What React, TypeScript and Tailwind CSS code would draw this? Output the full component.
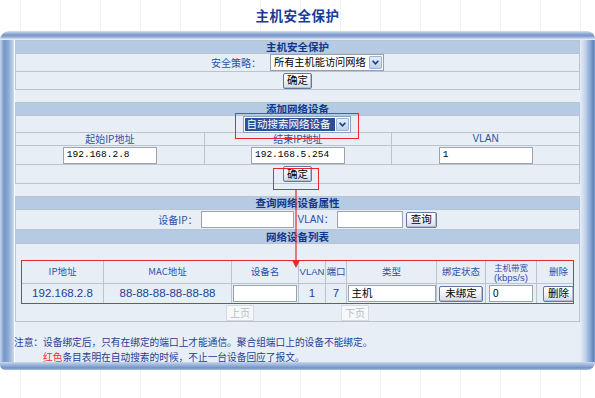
import React from "react";

const LINE = "border-[#bcc3cc]";

function Chevron() {
  return (
    <svg width="7" height="5" viewBox="0 0 7 5">
      <path d="M0.6 0.8 L3.5 3.8 L6.4 0.8" stroke="#1c3b7c" strokeWidth="1.6" fill="none" />
    </svg>
  );
}

function Btn({ children, className = "" }: { children: React.ReactNode; className?: string }) {
  return (
    <div
      className={
        "h-[16px] flex items-center justify-center border border-[#6179a0] rounded-[2px] bg-[linear-gradient(to_bottom,#ffffff,#eef1f5_50%,#d5dce7)] text-[10.5px] leading-none text-black whitespace-nowrap shadow-[inset_-1px_-1px_0_#b3bfd1] " +
        className
      }
    >
      {children}
    </div>
  );
}

function DisabledBtn({ children }: { children: React.ReactNode }) {
  return (
    <div className="h-[16px] w-[28px] flex items-center justify-center border border-[#d6d9de] bg-[#f7f8fa] text-[10px] leading-none text-[#b8bcc4]">
      {children}
    </div>
  );
}

function Input({ value = "", className = "" }: { value?: string; className?: string }) {
  return (
    <div
      className={
        "h-[17px] bg-white border border-[#9aa3af] flex items-center pl-[3px] text-black leading-none whitespace-nowrap overflow-hidden " +
        className
      }
    >
      {value}
    </div>
  );
}

function Select({ text, className = "", highlight = false }: { text: string; className?: string; highlight?: boolean }) {
  return (
    <div className={"h-[17px] flex bg-white border border-[#8ea0b8] " + className}>
      <div className="flex-1 flex items-stretch p-[1px] overflow-hidden">
        {highlight ? (
          <div className="flex-1 flex items-center pl-[2px] bg-[#2d4f9b] text-white text-[10.5px] leading-none whitespace-nowrap">{text}</div>
        ) : (
          <div className="flex-1 flex items-center pl-[2px] text-black text-[10.2px] leading-none whitespace-nowrap">{text}</div>
        )}
      </div>
      <div className="w-[13px] shrink-0 my-[1px] mr-[1px] border border-[#9db3d6] rounded-[1px] bg-[linear-gradient(to_bottom,#e6edf8,#bfd0ea)] flex items-center justify-center">
        <Chevron />
      </div>
    </div>
  );
}

function Header({ children, h = "h-[12px]" }: { children: React.ReactNode; h?: string }) {
  return (
    <div className={h + " bg-[#b5cbe4] flex items-center justify-center text-[10.5px] font-bold text-[#12378a] leading-[12px]"}>
      {children}
    </div>
  );
}

export default function App() {
  return (
    <div className="relative w-[595px] h-[398px] overflow-hidden bg-white bg-[linear-gradient(to_right,#f2f2f2_1px,transparent_1px)] bg-[length:40px_100%] bg-[position:20px_0] font-['Noto_Sans_CJK_SC','Liberation_Sans',sans-serif] text-[10px]">
      <div className="h-[31px] flex items-center justify-center text-[13.5px] font-bold text-[#173d98] tracking-[0.5px] leading-none">
        主机安全保护
      </div>

      <div>
        <div className="h-[9px] rounded-tl-[10px] rounded-tr-[9px] bg-[linear-gradient(to_bottom,#d3dff0_0%,#87a5d1_35%,#7898c9_55%,#b9cbe6_80%,#f2f6fb_100%)]" />
        <div className="flex">
          <div className="w-[15px] border-r border-white bg-[linear-gradient(to_right,#c7d6ec_0%,#7397ca_30%,#8eaad5_60%,#cbd9ee_100%)]" />
          <div className="w-[565px] bg-[#e8eef6] flex flex-col">
            {/* Section 1 */}
            <div className={"border " + LINE}>
              <Header>主机安全保护</Header>
              <div className={"h-[18px] border-t " + LINE + " flex items-center justify-center gap-[9px]"}>
                <span className="text-[10px] text-[#2b52aa] leading-none">安全策略：</span>
                <Select text="所有主机能访问网络" className="w-[114px]" />
              </div>
              <div className={"h-[18px] border-t " + LINE + " flex items-center justify-center"}>
                <Btn className="w-[29px]">确定</Btn>
              </div>
            </div>

            <div className="h-[12px]" />

            {/* Section 2 */}
            <div className={"border " + LINE}>
              <Header>添加网络设备</Header>
              <div className={"h-[17px] border-t " + LINE + " flex items-center justify-center"}>
                <Select text="自动搜索网络设备" className="w-[108px] ml-[-2px]" highlight />
              </div>
              <div className={"h-[13px] border-t " + LINE + " grid grid-cols-3 text-[#2b52aa] text-[10px] leading-none"}>
                <div className="flex items-center justify-center">起始IP地址</div>
                <div className={"flex items-center justify-center border-l " + LINE}>结束IP地址</div>
                <div className={"flex items-center justify-center border-l " + LINE + " font-['Liberation_Sans',sans-serif]"}>VLAN</div>
              </div>
              <div className={"h-[19px] border-t " + LINE + " grid grid-cols-3 font-['Liberation_Mono',monospace] text-[9.5px]"}>
                <div className="flex items-center justify-center">
                  <Input value="192.168.2.8" className="w-[94px]" />
                </div>
                <div className={"flex items-center justify-center border-l " + LINE}>
                  <Input value="192.168.5.254" className="w-[94px]" />
                </div>
                <div className={"flex items-center justify-center border-l " + LINE}>
                  <Input value="1" className="w-[94px]" />
                </div>
              </div>
              <div className={"h-[19px] border-t " + LINE + " flex items-center justify-center"}>
                <Btn className="w-[29px]">确定</Btn>
              </div>
            </div>

            <div className="h-[12px]" />

            {/* Section 3 */}
            <div className={"border " + LINE}>
              <Header>查询网络设备属性</Header>
              <div className={"h-[20px] border-t " + LINE + " flex items-center justify-center text-[#2b52aa] leading-none"}>
                <span className="text-[10px] mr-[3px]">设备IP：</span>
                <Input className="w-[93px]" />
                <span className="ml-[4px] mr-[3px] text-[10px] font-['Liberation_Sans','Noto_Sans_CJK_SC',sans-serif]">VLAN：</span>
                <Input className="w-[66px]" />
                <Btn className="w-[31px] ml-[3px]">查询</Btn>
              </div>
              <div className={"border-t " + LINE}>
                <Header h="h-[13px]">网络设备列表</Header>
              </div>
              <div className={"h-[78px] border-t " + LINE + " flex flex-col"}>
                <div className="h-[16px]" />
                <div className="mx-[5px] border border-[#e8262b]">
                  <div className="grid grid-cols-[81px_128px_67px_27px_21px_90px_49px_51px_44px] text-[#2b52aa] text-[9.5px] leading-none h-[22px]">
                    <div className="flex items-center justify-center">IP地址</div>
                    <div className={"flex items-center justify-center border-l " + LINE}>MAC地址</div>
                    <div className={"flex items-center justify-center border-l " + LINE}>设备名</div>
                    <div className={"flex items-center justify-center border-l " + LINE + " font-['Liberation_Sans',sans-serif]"}>VLAN</div>
                    <div className={"flex items-center justify-center border-l " + LINE}>端口</div>
                    <div className={"flex items-center justify-center border-l " + LINE}>类型</div>
                    <div className={"flex items-center justify-center border-l " + LINE}>绑定状态</div>
                    <div className={"flex flex-col items-center justify-center border-l " + LINE}>
                      <span className="text-[8.5px] leading-[10px]">主机带宽</span>
                      <span className="font-['Liberation_Sans',sans-serif] text-[9.5px] leading-[11px]">(kbps/s)</span>
                    </div>
                    <div className={"flex items-center justify-center border-l " + LINE}>删除</div>
                  </div>
                  <div className={"grid grid-cols-[81px_128px_67px_27px_21px_90px_49px_51px_44px] h-[20px] border-t " + LINE + " text-[#1f3f94] text-[11.5px] leading-none font-['Liberation_Sans',sans-serif]"}>
                    <div className="flex items-center justify-center">192.168.2.8</div>
                    <div className={"flex items-center justify-center border-l " + LINE}>88-88-88-88-88-88</div>
                    <div className={"flex items-center justify-center border-l " + LINE}>
                      <Input className="w-[64px] h-[16px]" />
                    </div>
                    <div className={"flex items-center justify-center border-l " + LINE}>1</div>
                    <div className={"flex items-center justify-center border-l " + LINE}>7</div>
                    <div className={"flex items-center justify-center border-l " + LINE}>
                      <Input value="主机" className="w-[88px] h-[16px] text-[10.5px] font-['Noto_Sans_CJK_SC',sans-serif]" />
                    </div>
                    <div className={"flex items-center justify-center border-l " + LINE + " font-['Noto_Sans_CJK_SC',sans-serif]"}>
                      <Btn className="w-[44px]">未绑定</Btn>
                    </div>
                    <div className={"flex items-center justify-center border-l " + LINE}>
                      <Input value="0" className="w-[44px] h-[16px] text-[10px]" />
                    </div>
                    <div className={"flex items-center justify-center border-l " + LINE + " font-['Noto_Sans_CJK_SC',sans-serif]"}>
                      <Btn className="w-[31px]">删除</Btn>
                    </div>
                  </div>
                </div>
                <div className="flex justify-center gap-[87px] pt-[1px]">
                  <DisabledBtn>上页</DisabledBtn>
                  <DisabledBtn>下页</DisabledBtn>
                </div>
              </div>
            </div>

            {/* Notes */}
            <div className="h-[40px] pt-[13px] text-[9.7px] leading-[15px] text-[#1d3f95] -ml-[1px] whitespace-nowrap">
              <div>注意：设备绑定后，只有在绑定的端口上才能通信。聚合组端口上的设备不能绑定。</div>
              <div className="pl-[29px]">
                <span className="text-[#ff2b2b]">红色</span>条目表明在自动搜索的时候，不止一台设备回应了报文。
              </div>
            </div>
          </div>
          <div className="w-[15px] bg-[linear-gradient(to_right,#e7edf6_0%,#c3d3ea_35%,#86a4d2_70%,#5f85bd_90%,#8eaad5_100%)]" />
        </div>
        <div className="h-[8px] rounded-bl-[6px] rounded-br-[9px] bg-[linear-gradient(to_bottom,#c9d7eb_0%,#97b1d9_40%,#6f92c6_75%,#a9bfe0_100%)]" />
      </div>

      {/* red annotations */}
      <div className="absolute left-[235px] top-[113px] w-[124px] h-[26px] border-[1.5px] border-[#e8262b]" />
      <div className="absolute left-[273px] top-[168px] w-[46px] h-[22px] border-[1.5px] border-[#e8262b]" />
      <svg className="absolute left-[290px] top-[189px]" width="12" height="80" viewBox="0 0 12 80">
        <line x1="6" y1="0" x2="6" y2="72" stroke="#e8262b" strokeWidth="1.2" />
        <polygon points="2,71 10,71 6,79" fill="#e8262b" />
      </svg>
    </div>
  );
}
